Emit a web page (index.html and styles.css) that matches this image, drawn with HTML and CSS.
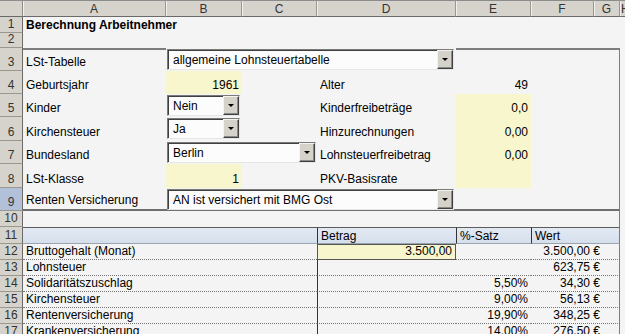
FILE: index.html
```html
<!DOCTYPE html>
<html lang="de">
<head>
<meta charset="utf-8">
<title>Berechnung Arbeitnehmer</title>
<link rel="stylesheet" href="styles.css">
</head>
<body>
<div class="sheet">
  <div class="corner"></div>
  <div class="ch">A</div><div class="ch">B</div><div class="ch">C</div><div class="ch">D</div><div class="ch">E</div><div class="ch">F</div><div class="ch">G</div><div class="ch ch-h">H</div>

  <div class="rh">1</div>
  <div class="c title s7">Berechnung Arbeitnehmer</div>
  <div class="c"></div>

  <div class="rh">2</div>
  <div class="c s7"></div>
  <div class="c"></div>

  <div class="rh">3</div>
  <div class="c tb">LSt-Tabelle</div>
  <div class="c s3 ctl"><div class="dd dd-wide"><span class="dd-text">allgemeine Lohnsteuertabelle</span><span class="btn"></span></div></div>
  <div class="c tb"></div><div class="c tb"></div><div class="c tb rb"></div>
  <div class="c"></div>

  <div class="rh">4</div>
  <div class="c">Geburtsjahr</div>
  <div class="c yel num">1961</div>
  <div class="c"></div>
  <div class="c">Alter</div>
  <div class="c num">49</div>
  <div class="c"></div><div class="c rb"></div>
  <div class="c"></div>

  <div class="rh">5</div>
  <div class="c">Kinder</div>
  <div class="c ctl"><div class="dd dd-small"><span class="dd-text">Nein</span><span class="btn"></span></div></div>
  <div class="c"></div>
  <div class="c">Kinderfreibeträge</div>
  <div class="c yel num">0,0</div>
  <div class="c"></div><div class="c rb"></div>
  <div class="c"></div>

  <div class="rh">6</div>
  <div class="c">Kirchensteuer</div>
  <div class="c ctl"><div class="dd dd-small"><span class="dd-text">Ja</span><span class="btn"></span></div></div>
  <div class="c"></div>
  <div class="c">Hinzurechnungen</div>
  <div class="c yel num">0,00</div>
  <div class="c"></div><div class="c rb"></div>
  <div class="c"></div>

  <div class="rh">7</div>
  <div class="c">Bundesland</div>
  <div class="c s2 ctl"><div class="dd dd-mid"><span class="dd-text">Berlin</span><span class="btn"></span></div></div>
  <div class="c">Lohnsteuerfreibetrag</div>
  <div class="c yel num">0,00</div>
  <div class="c"></div><div class="c rb"></div>
  <div class="c"></div>

  <div class="rh">8</div>
  <div class="c">LSt-Klasse</div>
  <div class="c yel num">1</div>
  <div class="c"></div>
  <div class="c">PKV-Basisrate</div>
  <div class="c yel"></div>
  <div class="c"></div><div class="c rb"></div>
  <div class="c"></div>

  <div class="rh sel">9</div>
  <div class="c bb">Renten Versicherung</div>
  <div class="c s3 bb ctl"><div class="dd dd-wide"><span class="dd-text">AN ist versichert mit BMG Ost</span><span class="btn"></span></div></div>
  <div class="c bb"></div><div class="c bb"></div><div class="c bb rb"></div>
  <div class="c"></div>

  <div class="rh">10</div>
  <div class="c s7 rb"></div>
  <div class="c"></div>

  <div class="rh">11</div>
  <div class="th s3"></div>
  <div class="th vl">Betrag</div>
  <div class="th vl">%-Satz</div>
  <div class="th vl s2 rb">Wert</div>
  <div class="c"></div>

  <div class="rh">12</div>
  <div class="c row s3">Bruttogehalt (Monat)</div>
  <div class="c row vl inp num">3.500,00</div>
  <div class="c row num"></div>
  <div class="c row s2 rb num val">3.500,00 €</div>
  <div class="c"></div>

  <div class="rh">13</div>
  <div class="c row s3">Lohnsteuer</div>
  <div class="c row vl"></div>
  <div class="c row num"></div>
  <div class="c row s2 rb num val">623,75 €</div>
  <div class="c"></div>

  <div class="rh">14</div>
  <div class="c row s3">Solidaritätszuschlag</div>
  <div class="c row vl"></div>
  <div class="c row num">5,50%</div>
  <div class="c row s2 rb num val">34,30 €</div>
  <div class="c"></div>

  <div class="rh">15</div>
  <div class="c row s3">Kirchensteuer</div>
  <div class="c row vl"></div>
  <div class="c row num">9,00%</div>
  <div class="c row s2 rb num val">56,13 €</div>
  <div class="c"></div>

  <div class="rh">16</div>
  <div class="c row s3">Rentenversicherung</div>
  <div class="c row vl"></div>
  <div class="c row num">19,90%</div>
  <div class="c row s2 rb num val">348,25 €</div>
  <div class="c"></div>

  <div class="rh">17</div>
  <div class="c row s3">Krankenversicherung</div>
  <div class="c row vl"></div>
  <div class="c row num">14,00%</div>
  <div class="c row s2 rb num val">276,50 €</div>
  <div class="c"></div>
</div>
</body>
</html>
```
FILE: styles.css
```css
html, body {
  margin: 0;
  padding: 0;
  background: #f4f4f4;
}

body {
  font-family: "Liberation Sans", Arial, sans-serif;
  font-size: 12px;
  color: #000;
  overflow: hidden;
}

.sheet {
  display: grid;
  grid-template-columns: 23px 143px 76px 75px 139px 75px 63px 26px 20px;
  grid-template-rows: 17px 16px 15px 23px 23px 23px 24px 23px 24px 23px 16px 17px 16px 16px 16px 16px 16px 16px;
  width: 625px;
  height: 334px;
  overflow: hidden;
}

.corner,
.ch,
.rh {
  background: #d6d3cc;
  color: #333;
  box-sizing: border-box;
}

.corner {
  border-top: 1px solid #8c8c8c;
  border-right: 1px solid #8c8c8c;
  border-bottom: 1px solid #6a6a6a;
}

.ch {
  border-top: 1px solid #8c8c8c;
  border-bottom: 1px solid #6a6a6a;
  border-right: 1px solid #9a978f;
  box-shadow: inset 1px 0 0 #f2f0ea;
  display: flex;
  align-items: center;
  justify-content: center;
  padding-top: 1px;
}

.ch-h {
  justify-content: flex-start;
  padding-left: 1px;
}

.rh {
  border-right: 1px solid #6a6a6a;
  border-bottom: 1px solid #9a978f;
  display: flex;
  align-items: flex-end;
  justify-content: center;
  padding-bottom: 1px;
  line-height: 13px;
}

.rh.sel {
  background: #b3c0d9;
}

.c {
  box-sizing: border-box;
  padding: 0 3px 2px;
  display: flex;
  align-items: flex-end;
  white-space: nowrap;
  overflow: visible;
  line-height: 14px;
}

.title {
  font-weight: bold;
  padding-bottom: 1px;
}

.s2 { grid-column: span 2; }
.s3 { grid-column: span 3; }
.s7 { grid-column: span 7; }

.num { justify-content: flex-end; }

.yel { background: #f8f6cc; }

.tb { border-top: 2px solid #7d7d7d; }
.bb { border-bottom: 2px solid #6f6f6f; }
.rb { border-right: 1px solid #7d7d7d; }

/* combo boxes */
.ctl {
  padding: 1px 0 0 1px;
  align-items: flex-start;
}

.dd {
  box-sizing: border-box;
  height: 21px;
  background: #fcfcfc;
  border-top: 1px solid #7a7a7a;
  border-left: 1px solid #7a7a7a;
  border-right: 1px solid #e6e6e6;
  border-bottom: 1px solid #e6e6e6;
  box-shadow: inset 1px 1px 0 #404040;
  display: flex;
  align-items: center;
  justify-content: space-between;
}

.dd-wide { width: 287px; }
.dd-mid { width: 149px; }
.dd-small { width: 73px; }

.dd-text {
  padding-left: 5px;
  padding-top: 1px;
}

.btn {
  box-sizing: border-box;
  width: 16px;
  height: 19px;
  background: #d5d2ca;
  border-top: 1px solid #f4f3ee;
  border-left: 1px solid #f4f3ee;
  border-right: 1px solid #404040;
  border-bottom: 1px solid #404040;
  box-shadow: inset -1px -1px 0 #8a8a8a;
  position: relative;
}

.btn::after {
  content: "";
  position: absolute;
  left: 4px;
  top: 7px;
  border-left: 3px solid transparent;
  border-right: 3px solid transparent;
  border-top: 3px solid #000;
}

/* table */
.th {
  box-sizing: border-box;
  background: linear-gradient(#e2e9f3, #d5dfec);
  border-top: 1px solid #5c5c5c;
  border-bottom: 1px solid #9aa3b0;
  padding: 0 3px;
  display: flex;
  align-items: center;
  line-height: 14px;
}

.vl { border-left: 1px solid #333; }

.row {
  border-bottom: 1px dotted #777;
  padding-bottom: 1px;
}

.inp {
  background: #f8f6cc;
  border: 1px solid #555;
}

.val { padding-right: 19px; }
```
